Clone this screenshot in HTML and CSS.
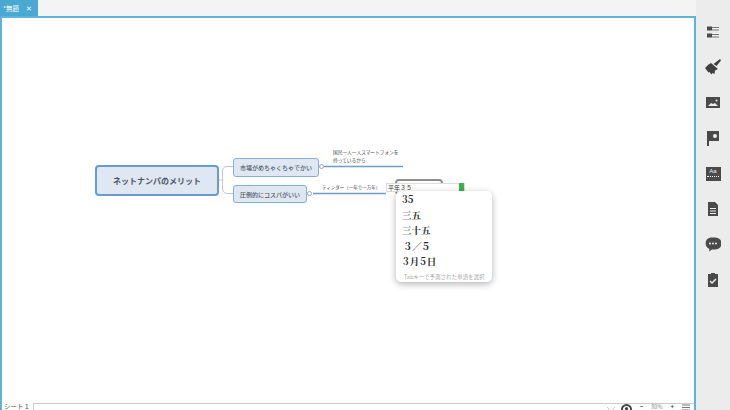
FILE: index.html
```html
<!DOCTYPE html>
<html lang="ja">
<head>
<meta charset="utf-8">
<title>*無題</title>
<link rel="stylesheet" href="styles.css">
</head>
<body>
<div class="app">
  <div class="main">
    <div class="tabbar"><div class="tab"><span class="tab-title">*無題</span><span class="tab-close">✕</span></div></div>
    <div class="frame">
      <div class="canvas">
        <svg class="links" width="692" height="386" viewBox="0 0 692 386" fill="none">
          <path d="M216 162 H220" stroke="#b9c8d8"/>
          <path d="M232 148.500 H225 Q220.500 148.500 220.500 153 V170 Q220.500 175.500 225 175.500 H232" stroke="#b9c8d8"/>
          <path d="M322 148.500 H401" stroke="#6f9cc4" stroke-width="1.500"/>
          <path d="M311 175.500 H384" stroke="#6f9cc4" stroke-width="1.500"/>
          <circle cx="319.500" cy="148.500" r="2" fill="#fff" stroke="#9aa7b3"/>
          <circle cx="307.500" cy="175.500" r="2" fill="#fff" stroke="#9aa7b3"/>
        </svg>
        <div class="node root">ネットナンパのメリット</div>
        <div class="node branch branch-a">市場がめちゃくちゃでかい</div>
        <div class="node branch branch-b">圧倒的にコスパがいい</div>
        <div class="leaf leaf-a">国民一人一人スマートフォンを<br>持っているから</div>
        <div class="leaf leaf-b">ティンダー（一年で一万年）</div>
        <div class="ghost"></div>
        <div class="ime-input"><span class="ime-label">平年</span><span class="ime-text">３５</span><span class="ime-caret"></span></div>
        <div class="popup">
          <div class="cand">35</div>
          <div class="cand">三五</div>
          <div class="cand">三十五</div>
          <div class="cand cand-in">３／５</div>
          <div class="cand cand-wide">3月5日</div>
          <div class="hint">Tabキーで予測された単語を選択</div>
        </div>
      </div>
      <div class="footer">
        <span class="sheet">シート 1</span>
        <div class="sheet-box"><svg class="chev" width="10" height="6" viewBox="0 0 10 6" fill="none"><path d="M1 1l4 4 4-4" stroke="#ccc"/></svg></div>
        <div class="zoom-tools">
          <svg width="11" height="11" viewBox="0 0 11 11"><circle cx="5.500" cy="5.500" r="4.500" fill="none" stroke="#444" stroke-width="2"/><circle cx="5.500" cy="4.500" r="1.600" fill="#444"/></svg>
          <span class="zoom-sign">−</span>
          <span class="zoom-val">80%</span>
          <span class="zoom-sign">+</span>
          <svg width="8" height="7" viewBox="0 0 8 7"><path d="M0 1h8M0 3.500h8M0 6h8" stroke="#777"/></svg>
        </div>
      </div>
    </div>
  </div>
  <aside class="rail">
    <svg class="ico" width="16" height="16" viewBox="0 0 16 16" fill="#4a4a4a"><rect x="2" y="2.500" width="5" height="4"/><rect x="2" y="9.500" width="5" height="4"/><path d="M7 3h7v1H7zM7 5.500h7v1H7zM7 10h7v1H7zM7 12.500h7v1H7z" fill="#777"/></svg>
    <svg class="ico" width="16" height="16" viewBox="0 0 16 16" fill="#3f3f3f"><path d="M15 0l1 1.500-4.500 5.500-3-2z"/><path d="M6 4l7 6-3 1.500-.5 3.500-2-1-1 1.500-2-2.500-1 .5L0 9l3-3z"/></svg>
    <svg class="ico" width="16" height="16" viewBox="0 0 16 16"><rect x="1" y="2" width="14" height="11" fill="#4a4a4a"/><path d="M3 11l3-3 2 1 2-1 3 3z" fill="#eee"/><circle cx="11.500" cy="5.500" r="1" fill="#eee"/></svg>
    <svg class="ico" width="16" height="16" viewBox="0 0 16 16" fill="#4a4a4a"><rect x="2" y="1" width="2" height="15"/><path d="M4 1h10v10H4z"/><circle cx="10" cy="6" r="2" fill="#eee"/></svg>
    <div class="aa"><span class="aa-text">Aa</span><span class="aa-line"></span></div>
    <svg class="ico" width="16" height="16" viewBox="0 0 16 16" fill="#4a4a4a"><path d="M3 1h7l3 3v11H3z"/><path d="M5 7h6v1H5zM5 9.500h6v1H5zM5 12h6v1H5z" fill="#eee"/></svg>
    <svg class="ico" width="16" height="16" viewBox="0 0 16 16" fill="#4a4a4a"><path d="M5.500 1.500h5a6 6 0 0 1 0 12H7l-3 2 .5-2.500A6 6 0 0 1 5.500 1.500z"/><circle cx="5" cy="7.500" r="1" fill="#eee"/><circle cx="8" cy="7.500" r="1" fill="#eee"/><circle cx="11" cy="7.500" r="1" fill="#eee"/></svg>
    <svg class="ico" width="16" height="16" viewBox="0 0 16 16" fill="#4a4a4a"><path d="M3 2h3V1h4v1h3v13H3z"/><path d="M5 9l2 2 4-4" fill="none" stroke="#eee" stroke-width="1.500"/></svg>
  </aside>
</div>
</body>
</html>
```
FILE: styles.css
```css
* { box-sizing: border-box; }
html, body { margin: 0; height: 100%; }
body { font-family: "Noto Sans CJK JP", "Liberation Sans", sans-serif; overflow: hidden; background: #fff; }
.app { display: flex; width: 730px; height: 410px; }
.main { width: 696px; display: flex; flex-direction: column; background: #f4f4f4; }
.tabbar { height: 16px; flex: none; display: flex; }
.tab { width: 38px; height: 16px; background: #4aa9d2; color: #fff; display: flex; align-items: center; gap: 7px; padding-left: 3px; font-size: 6.500px; }
.tab-close { font-size: 7px; }
.frame { flex: 1; border: 2px solid #5fb3d8; border-bottom: 0; display: flex; flex-direction: column; background: #fff; min-height: 0; }
.canvas { flex: 1; position: relative; }
.links { position: absolute; left: 0; top: 0; }
.node { position: absolute; background: #dfe7f2; color: #4a5663; display: flex; align-items: center; justify-content: center; white-space: nowrap; }
.root { left: 93px; top: 147px; width: 124px; height: 31px; border: 2px solid #6a9bcd; border-radius: 4px; font-size: 8px; font-weight: 700; }
.branch { height: 19px; border: 1px solid #8aaed2; border-radius: 3px; font-size: 6px; font-weight: 500; }
.branch-a { left: 231px; top: 140px; width: 86px; }
.branch-b { left: 231px; top: 167px; width: 74px; height: 18px; }
.leaf { position: absolute; font-size: 4.700px; line-height: 8px; color: #444; white-space: nowrap; }
.leaf-a { left: 331px; top: 130px; }
.leaf-b { left: 320px; top: 165px; font-size: 4.500px; }
.ghost { position: absolute; left: 393px; top: 161px; width: 48px; height: 16px; border: 2px solid #8f8f8f; border-radius: 4px; background: #fff; }
.ime-input { position: absolute; left: 384px; top: 165px; width: 79px; height: 9px; background: #fff; border: 1px solid #ddd; display: flex; align-items: center; font-size: 6px; color: #333; padding-left: 1px; }
.ime-text { text-decoration: underline; text-decoration-color: #3a6ea5; }
.ime-caret { width: 5px; height: 9px; background: #3cb44a; margin-left: auto; }
.popup { position: absolute; left: 394px; top: 173px; width: 96px; height: 91px; background: #fff; border-radius: 5px; box-shadow: 0 2px 7px rgba(0,0,0,.3); padding: 1px 6px 0; font-family: "Noto Serif CJK JP", "Liberation Serif", "Noto Sans CJK JP", serif; }
.cand { height: 15.500px; line-height: 15.500px; font-size: 9.500px; font-weight: 700; color: #2a2a2a; }
.cand-in { padding-left: 1px; letter-spacing: -.5px; }
.cand-wide { padding-left: 1px; letter-spacing: 1px; }
.hint { margin-top: 3px; padding-left: 2px; font-size: 5.500px; color: #aaa; font-family: "Noto Sans CJK JP", sans-serif; white-space: nowrap; }
.footer { height: 7px; flex: none; display: flex; align-items: flex-start; background: #fff; position: relative; }
.sheet { font-size: 6.500px; line-height: 7px; color: #444; width: 31px; padding-left: 2px; white-space: nowrap; height: 7px; }
.sheet-box { flex: 1; border-top: 1px solid #ccc; border-left: 1px solid #ccc; height: 7px; position: relative; display: flex; justify-content: flex-end; }
.chev { margin: 2px 78px 0 0; }
.zoom-tools { position: absolute; right: 4px; top: 1px; height: 6px; display: flex; align-items: flex-start; gap: 8px; font-size: 6px; line-height: 6px; color: #444; }
.zoom-tools svg { flex: none; }
.zoom-val { color: #888; font-size: 5.500px; }
.zoom-sign { font-weight: 700; height: 6px; }
.rail { width: 34px; background: #ececec; display: flex; flex-direction: column; align-items: center; padding-top: 24px; gap: 19.400px; }
.ico { display: block; flex: none; }
.aa { width: 15px; height: 14px; margin: 1px 0; background: #4a4a4a; color: #eee; font-size: 6px; line-height: 8px; text-align: center; display: flex; flex-direction: column; align-items: center; font-family: "Liberation Sans", sans-serif; }
.aa-line { width: 12px; border-top: 1px dotted #eee; margin-top: 1px; }
```
